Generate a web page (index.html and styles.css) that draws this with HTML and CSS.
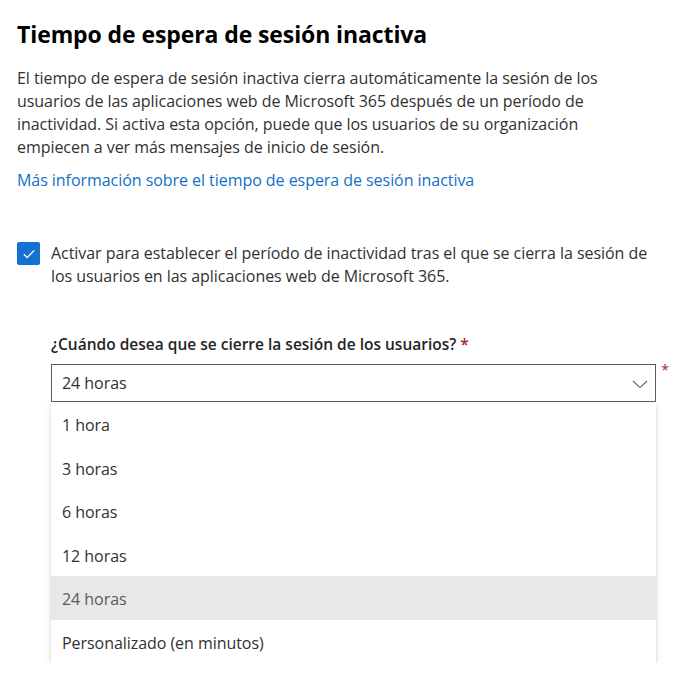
FILE: index.html
```html
<!DOCTYPE html>
<html lang="es">
<head>
<meta charset="utf-8">
<link rel="stylesheet" href="styles.css">
</head>
<body>
<div class="page">
  <h1 class="title">Tiempo de espera de sesión inactiva</h1>
  <p class="desc">El tiempo de espera de sesión inactiva cierra automáticamente la sesión de los usuarios de las aplicaciones web de Microsoft 365 después de un período de inactividad. Si activa esta opción, puede que los usuarios de su organización empiecen a ver más mensajes de inicio de sesión.</p>
  <a class="link" href="#">Más información sobre el tiempo de espera de sesión inactiva</a>

  <div class="check-row">
    <span class="checkbox">
      <svg width="14" height="14" viewBox="0 0 14 14"><path d="M1.8 7.3 L5.2 10.6 L12.2 3.4" fill="none" stroke="#fff" stroke-width="1.3"/></svg>
    </span>
    <span class="check-label">Activar para establecer el período de inactividad tras el que se cierra la sesión de los usuarios en las aplicaciones web de Microsoft 365.</span>
  </div>

  <div class="field">
    <div class="field-label">¿Cuándo desea que se cierre la sesión de los usuarios? <span class="req">*</span></div>
    <div class="select-wrap">
      <div class="select">
        <span>24 horas</span>
        <svg width="18" height="18" viewBox="0 0 18 18"><path d="M2 6 L9 12.6 L16 6" fill="none" stroke="#605e5c" stroke-width="1.1"/></svg>
      </div>
      <span class="req side">*</span>
    </div>
    <ul class="menu">
      <li>1 hora</li>
      <li>3 horas</li>
      <li>6 horas</li>
      <li>12 horas</li>
      <li class="selected">24 horas</li>
      <li>Personalizado (en minutos)</li>
    </ul>
  </div>
</div>
</body>
</html>
```

FILE: styles.css
```css
html, body {
  margin: 0;
  padding: 0;
  background: #fff;
}
body {
  font-family: "Open Sans", "Noto Sans", sans-serif;
  color: #323130;
}
.page {
  padding: 18px 17px 0 17px;
}
.title {
  margin: 0;
  font-size: 23px;
  font-weight: 700;
  color: #000;
  line-height: 32px;
  letter-spacing: -0.1px;
}
.desc {
  margin: 17px 0 0 0;
  font-size: 16px;
  line-height: 23px;
  width: 600px;
  letter-spacing: -0.05px;
}
.link {
  display: block;
  margin-top: 10px;
  font-size: 16px;
  line-height: 23px;
  color: #1170c9;
  text-decoration: none;
  letter-spacing: -0.05px;
}
.check-row {
  display: flex;
  align-items: flex-start;
  gap: 11px;
  margin-top: 50px;
}
.checkbox {
  flex: none;
  width: 23px;
  height: 23px;
  background: #1570d4;
  border-radius: 2px;
  display: flex;
  align-items: center;
  justify-content: center;
}
.check-label {
  font-size: 16px;
  line-height: 23px;
  letter-spacing: -0.05px;
  width: 610px;
}
.field {
  margin-left: 34px;
  margin-top: 46px;
  width: 605px;
}
.field-label {
  font-size: 15.5px;
  font-weight: 600;
  line-height: 21px;
  color: #242424;
}
.req {
  color: #a4262c;
}
.select-wrap {
  position: relative;
  margin-top: 9px;
}
.select {
  height: 36px;
  border: 1px solid #605e5c;
  display: flex;
  align-items: center;
  justify-content: space-between;
  padding: 0 6px 0 10px;
  font-size: 16px;
  letter-spacing: -0.05px;
}
.select svg {
  margin-top: 2px;
}
.side {
  position: absolute;
  right: -13px;
  top: -4px;
  font-size: 14px;
}
.menu {
  list-style: none;
  margin: 0;
  padding: 0;
  background: #fff;
  box-shadow: 0 3px 6px rgba(0,0,0,0.13), 0 0 2px rgba(0,0,0,0.1);
}
.menu li {
  height: 43.5px;
  box-sizing: border-box;
  padding: 3px 0 0 11px;
  display: flex;
  align-items: center;
  font-size: 16px;
  letter-spacing: -0.05px;
}
.menu li.selected {
  background: #e8e8e8;
  color: #5a5a5a;
}
```
